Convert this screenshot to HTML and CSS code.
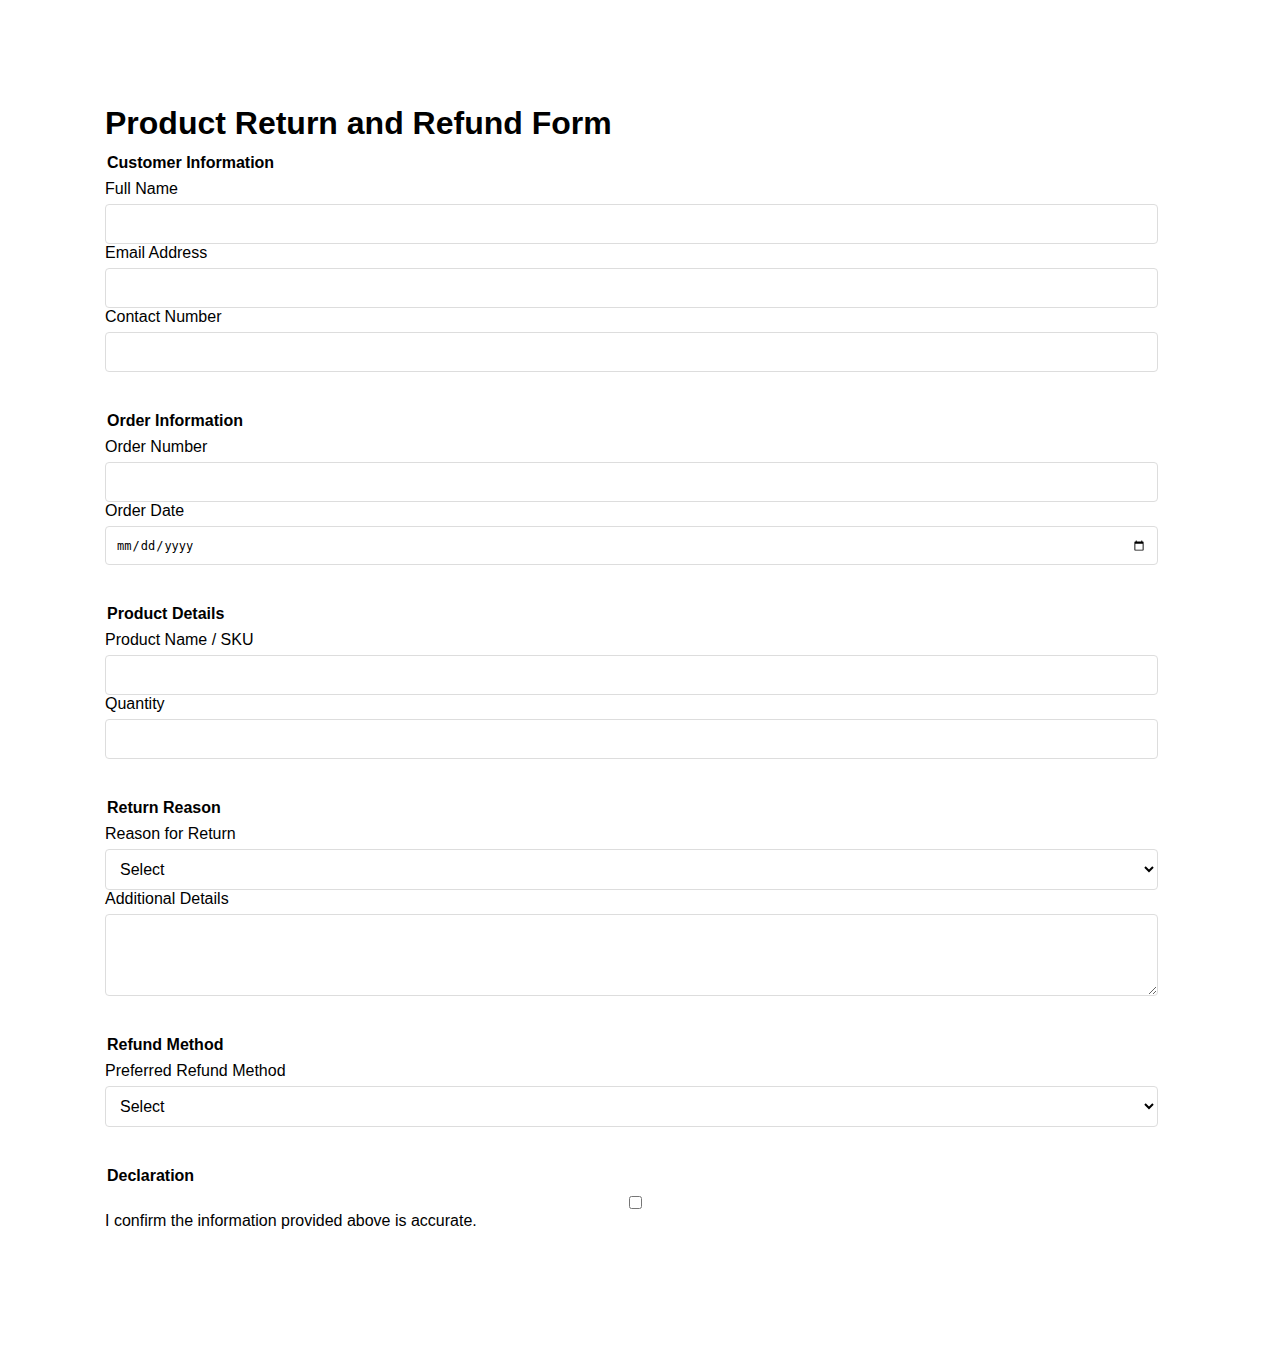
FILE: index.html
```html
<!DOCTYPE html>
<html lang="en">
<head>
<meta charset="utf-8">
<title>Product Return and Refund Form</title>
<link rel="stylesheet" href="styles.css">
</head>
<body>
<main class="page">
  <h1 class="title">Product Return and Refund Form</h1>
  <form class="form">
    <fieldset class="section">
      <legend class="section-title">Customer Information</legend>
      <label class="field-label" for="name">Full Name</label>
      <input class="field" type="text" id="name">
      <label class="field-label" for="email">Email Address</label>
      <input class="field" type="email" id="email">
      <label class="field-label" for="phone">Contact Number</label>
      <input class="field" type="tel" id="phone">
    </fieldset>
    <fieldset class="section">
      <legend class="section-title">Order Information</legend>
      <label class="field-label" for="order">Order Number</label>
      <input class="field" type="text" id="order">
      <label class="field-label" for="date">Order Date</label>
      <input class="field field-date" type="date" id="date">
    </fieldset>
    <fieldset class="section">
      <legend class="section-title">Product Details</legend>
      <label class="field-label" for="product">Product Name / SKU</label>
      <input class="field" type="text" id="product">
      <label class="field-label" for="qty">Quantity</label>
      <input class="field" type="number" id="qty">
    </fieldset>
    <fieldset class="section">
      <legend class="section-title">Return Reason</legend>
      <label class="field-label" for="reason">Reason for Return</label>
      <select class="field field-select" id="reason">
        <option>Select</option>
        <option>Damaged item</option>
        <option>Wrong item</option>
        <option>Not as described</option>
      </select>
      <label class="field-label" for="details">Additional Details</label>
      <textarea class="field field-area" id="details"></textarea>
    </fieldset>
    <fieldset class="section">
      <legend class="section-title">Refund Method</legend>
      <label class="field-label" for="method">Preferred Refund Method</label>
      <select class="field field-select" id="method">
        <option>Select</option>
        <option>Original payment method</option>
        <option>Store credit</option>
      </select>
    </fieldset>
    <fieldset class="section">
      <legend class="section-title">Declaration</legend>
      <input class="check" type="checkbox" id="confirm">
      <label class="check-label" for="confirm">I confirm the information provided above is accurate.</label>
    </fieldset>
  </form>
</main>
</body>
</html>
```

FILE: styles.css
```css
html, body {
  margin: 0;
  padding: 0;
  background: #fff;
}

body {
  font-family: "Liberation Sans", Arial, sans-serif;
  font-size: 16px;
  color: #000;
}

.page {
  max-width: 1053px;
  margin: 0 auto;
  padding: 105px 0 80px;
}

.title {
  font-size: 32px;
  font-weight: 700;
  line-height: 37px;
  margin: 0 0 12px;
}

.form {
  margin: 0;
}

.section {
  border: none;
  margin: 0 0 40px;
  padding: 0;
  min-width: 0;
}

.section-title {
  font-weight: 700;
  font-size: 16px;
  line-height: 18px;
  padding: 0 2px 8px;
}

.field-label {
  display: block;
  line-height: 18px;
  margin-bottom: 6px;
}

.field {
  display: block;
  width: 100%;
  box-sizing: border-box;
  height: 40px;
  padding: 10px;
  border: 1px solid #ddd;
  border-radius: 4px;
  font-family: "Liberation Sans", Arial, sans-serif;
  font-size: 16px;
  background: #fff;
  color: #000;
  margin: 0;
}

.field-date {
  height: 39px;
  font-family: "DejaVu Sans Mono", monospace;
  font-size: 12px;
}

.field-select {
  height: 41px;
  padding: 10px;
}

.field-area {
  height: 82px;
  resize: vertical;
}

.check {
  display: block;
  width: 100%;
  margin: 3px 3px 3px 4px;
  height: 13px;
}

.check-label {
  display: block;
  line-height: 18px;
}
```
